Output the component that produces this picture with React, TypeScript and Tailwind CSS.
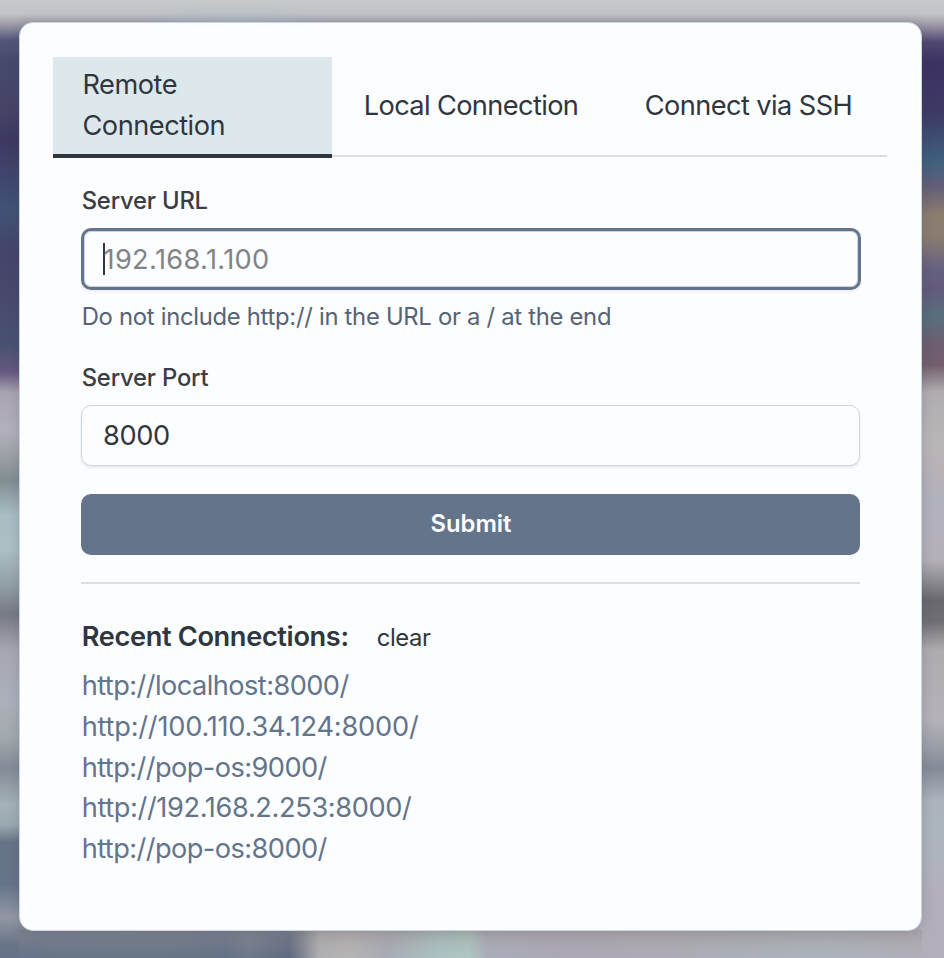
const tabs = [
  { label: "Remote Connection", active: true, tracking: "tracking-[-0.5px]" },
  { label: "Local Connection", active: false, tracking: "tracking-[-0.62px]" },
  { label: "Connect via SSH", active: false, tracking: "tracking-[-0.58px]" },
];

const recent = [
  { url: "http://localhost:8000/", tracking: "tracking-[-0.56px]" },
  { url: "http://100.110.34.124:8000/", tracking: "tracking-[-0.22px]" },
  { url: "http://pop-os:9000/", tracking: "tracking-[-0.57px]" },
  { url: "http://192.168.2.253:8000/", tracking: "tracking-[-0.37px]" },
  { url: "http://pop-os:8000/", tracking: "tracking-[-0.57px]" },
];

function Backdrop({ children }: { children: React.ReactNode }) {
  return (
    <div className="h-[958px] w-[944px] bg-[linear-gradient(180deg,#c8c9cb_0px,#c2c3c7_14px,#9795a4_26px,#535779_40px,#464a6e_60px,#464366_110px,#3e3862_140px,#40456c_175px,#405375_210px,#454369_255px,#4a4b70_310px,#475271_345px,#66597f_372px,#aaa5b1_393px,#b2b0bc_430px,#a5a6ad_448px,#808e92_480px,#a9bdc3_515px,#abbfc4_550px,#92a0a6_585px,#777a82_614px,#a5a7b1_650px,#adb1bc_700px,#a2a9ab_738px,#838b96_768px,#a5b2b8_805px,#9aa8b0_825px,#667487_842px,#65748a_885px,#9298a5_917px,#687487_945px,#65738a_958px)] bg-no-repeat">
      <div className="h-full w-full bg-[linear-gradient(180deg,#c8c9cb_0px,#c2c3c7_14px,#9894a4_26px,#514871_42px,#3d3162_62px,#3e3b66_115px,#40617e_163px,#625d78_185px,#8c7d70_215px,#8a7c70_237px,#65607f_270px,#635a7b_290px,#586f7d_317px,#6e5d70_345px,#735e6d_365px,#b0adb1_392px,#bab6b7_440px,#b8b2b6_470px,#b1b1bd_500px,#b4b0b9_560px,#8f8e93_580px,#68686f_600px,#706f75_622px,#b0abb0_650px,#b5b1b8_720px,#9ca0a9_745px,#858b96_768px,#abb2bc_800px,#acb5be_840px,#b2afbb_890px,#b2afba_958px)] bg-[length:50%_100%] bg-right bg-no-repeat">
        <div className="h-full w-full bg-[linear-gradient(180deg,rgba(158,148,146,0.4),rgba(158,148,146,0)),linear-gradient(90deg,#65738a_0px,#667587_140px,#637087_205px,#6c788b_230px,#5e6982_270px,#7d8391_283px,#b0b0b3_300px,#b6b5b6_330px,#a9acb6_368px,#aac4c4_420px,#aec8c5_450px,#aaaeba_468px,#ada9b7_545px,#afabb7_630px,#acafb8_690px,#adb4bd_810px,#b2afba_903px)] bg-[length:903px_28px] bg-[position:19px_100%] bg-no-repeat">
          <div className="flex h-full w-full bg-[radial-gradient(ellipse_at_50%_100%,rgba(170,190,197,0.6),rgba(170,190,197,0)_70%)] bg-[length:200px_23px] bg-[position:135px_0] bg-no-repeat pt-[22px] pl-[19px]">
            {children}
          </div>
        </div>
      </div>
    </div>
  );
}

export default function App() {
  return (
    <Backdrop>
      <main
        style={{ fontFamily: 'Inter, "Liberation Sans", sans-serif' }}
        className="h-[909px] w-[903px] rounded-[14px] border border-[#cad5e1] bg-[#fbfdff] px-[33px] pt-[34px] text-[27.2px] leading-[40.8px] text-[#30363d] shadow-[0_1px_12px_rgba(60,60,80,0.22)]"
      >
        <nav className="grid h-[101px] w-[834px] grid-cols-[279px_277px_278px] bg-[linear-gradient(#dcdee1,#dcdee1)] bg-[length:100%_2px] bg-[position:0_98px] bg-no-repeat">
          {tabs.map((t) => (
            <button
              key={t.label}
              className={
                t.active
                  ? "flex items-center border-b-4 border-[#30363d] bg-[#dde8ed] bg-clip-padding pl-[29.5px] text-left " + t.tracking
                  : "flex items-center justify-center pb-0.5 pl-px whitespace-nowrap " + t.tracking
              }
            >
              {t.active ? <span className="w-40">{t.label}</span> : t.label}
            </button>
          ))}
        </nav>

        <form className="mx-7 -mr-px flex w-[779px] flex-col pt-[25px]">
          <label className="h-[45px] pl-[0.7px] text-[23.8px] leading-[36px] font-medium tracking-[-0.2px] text-[#3b3d44]">
            Server URL
          </label>
          <div className="-mr-px flex h-[62px] items-center rounded-[10px] border-[3px] border-[#64748b] pl-[19px] tracking-[0.35px] text-[#828386] shadow-[0_2px_3px_rgba(0,0,0,0.06),inset_0_0_0_1px_#cbd5e1]">
            <span className="h-8 w-0.5 bg-[#30363d]" />
            <span className="-ml-0.5 pt-0.5 pl-[0.5px]">192.168.1.100</span>
          </div>
          <p className="mt-[9px] pl-[0.7px] text-[23.8px] leading-9 tracking-[-0.28px] text-[#586373]">
            Do not include http:// in the URL or a / at the end
          </p>
          <label className="mt-[25px] h-[45px] pl-[0.7px] text-[23.8px] leading-[36px] font-medium tracking-[-0.2px] text-[#3b3d44]">
            Server Port
          </label>
          <div className="flex h-[61px] items-center rounded-[10px] border border-[#cbd5e1] pt-0.5 pl-[21px] tracking-[-0.4px] shadow-[0_2px_3px_rgba(0,0,0,0.08)]">
            8000
          </div>
          <button
            type="button"
            className="mt-7 h-[61px] rounded-[10px] bg-[#64748b] pl-px text-[23.8px] font-semibold text-[#fbfdff]"
          >
            Submit
          </button>
          <hr className="mt-[27px] border-t-2 border-[#dcdee1]" />
        </form>

        <section className="mx-7 pt-[32.2px] pl-[0.7px]">
          <div className="flex items-center">
            <h2 className="w-[295px] font-semibold tracking-[-0.35px] whitespace-nowrap">Recent Connections:</h2>
            <button className="pt-0.5 text-[23.8px] tracking-[-0.35px]">clear</button>
          </div>
          <ul className="mt-[7px] text-[#64748b]">
            {recent.map(({ url, tracking }) => (
              <li key={url} className={tracking}>
                {url}
              </li>
            ))}
          </ul>
        </section>
      </main>
    </Backdrop>
  );
}
